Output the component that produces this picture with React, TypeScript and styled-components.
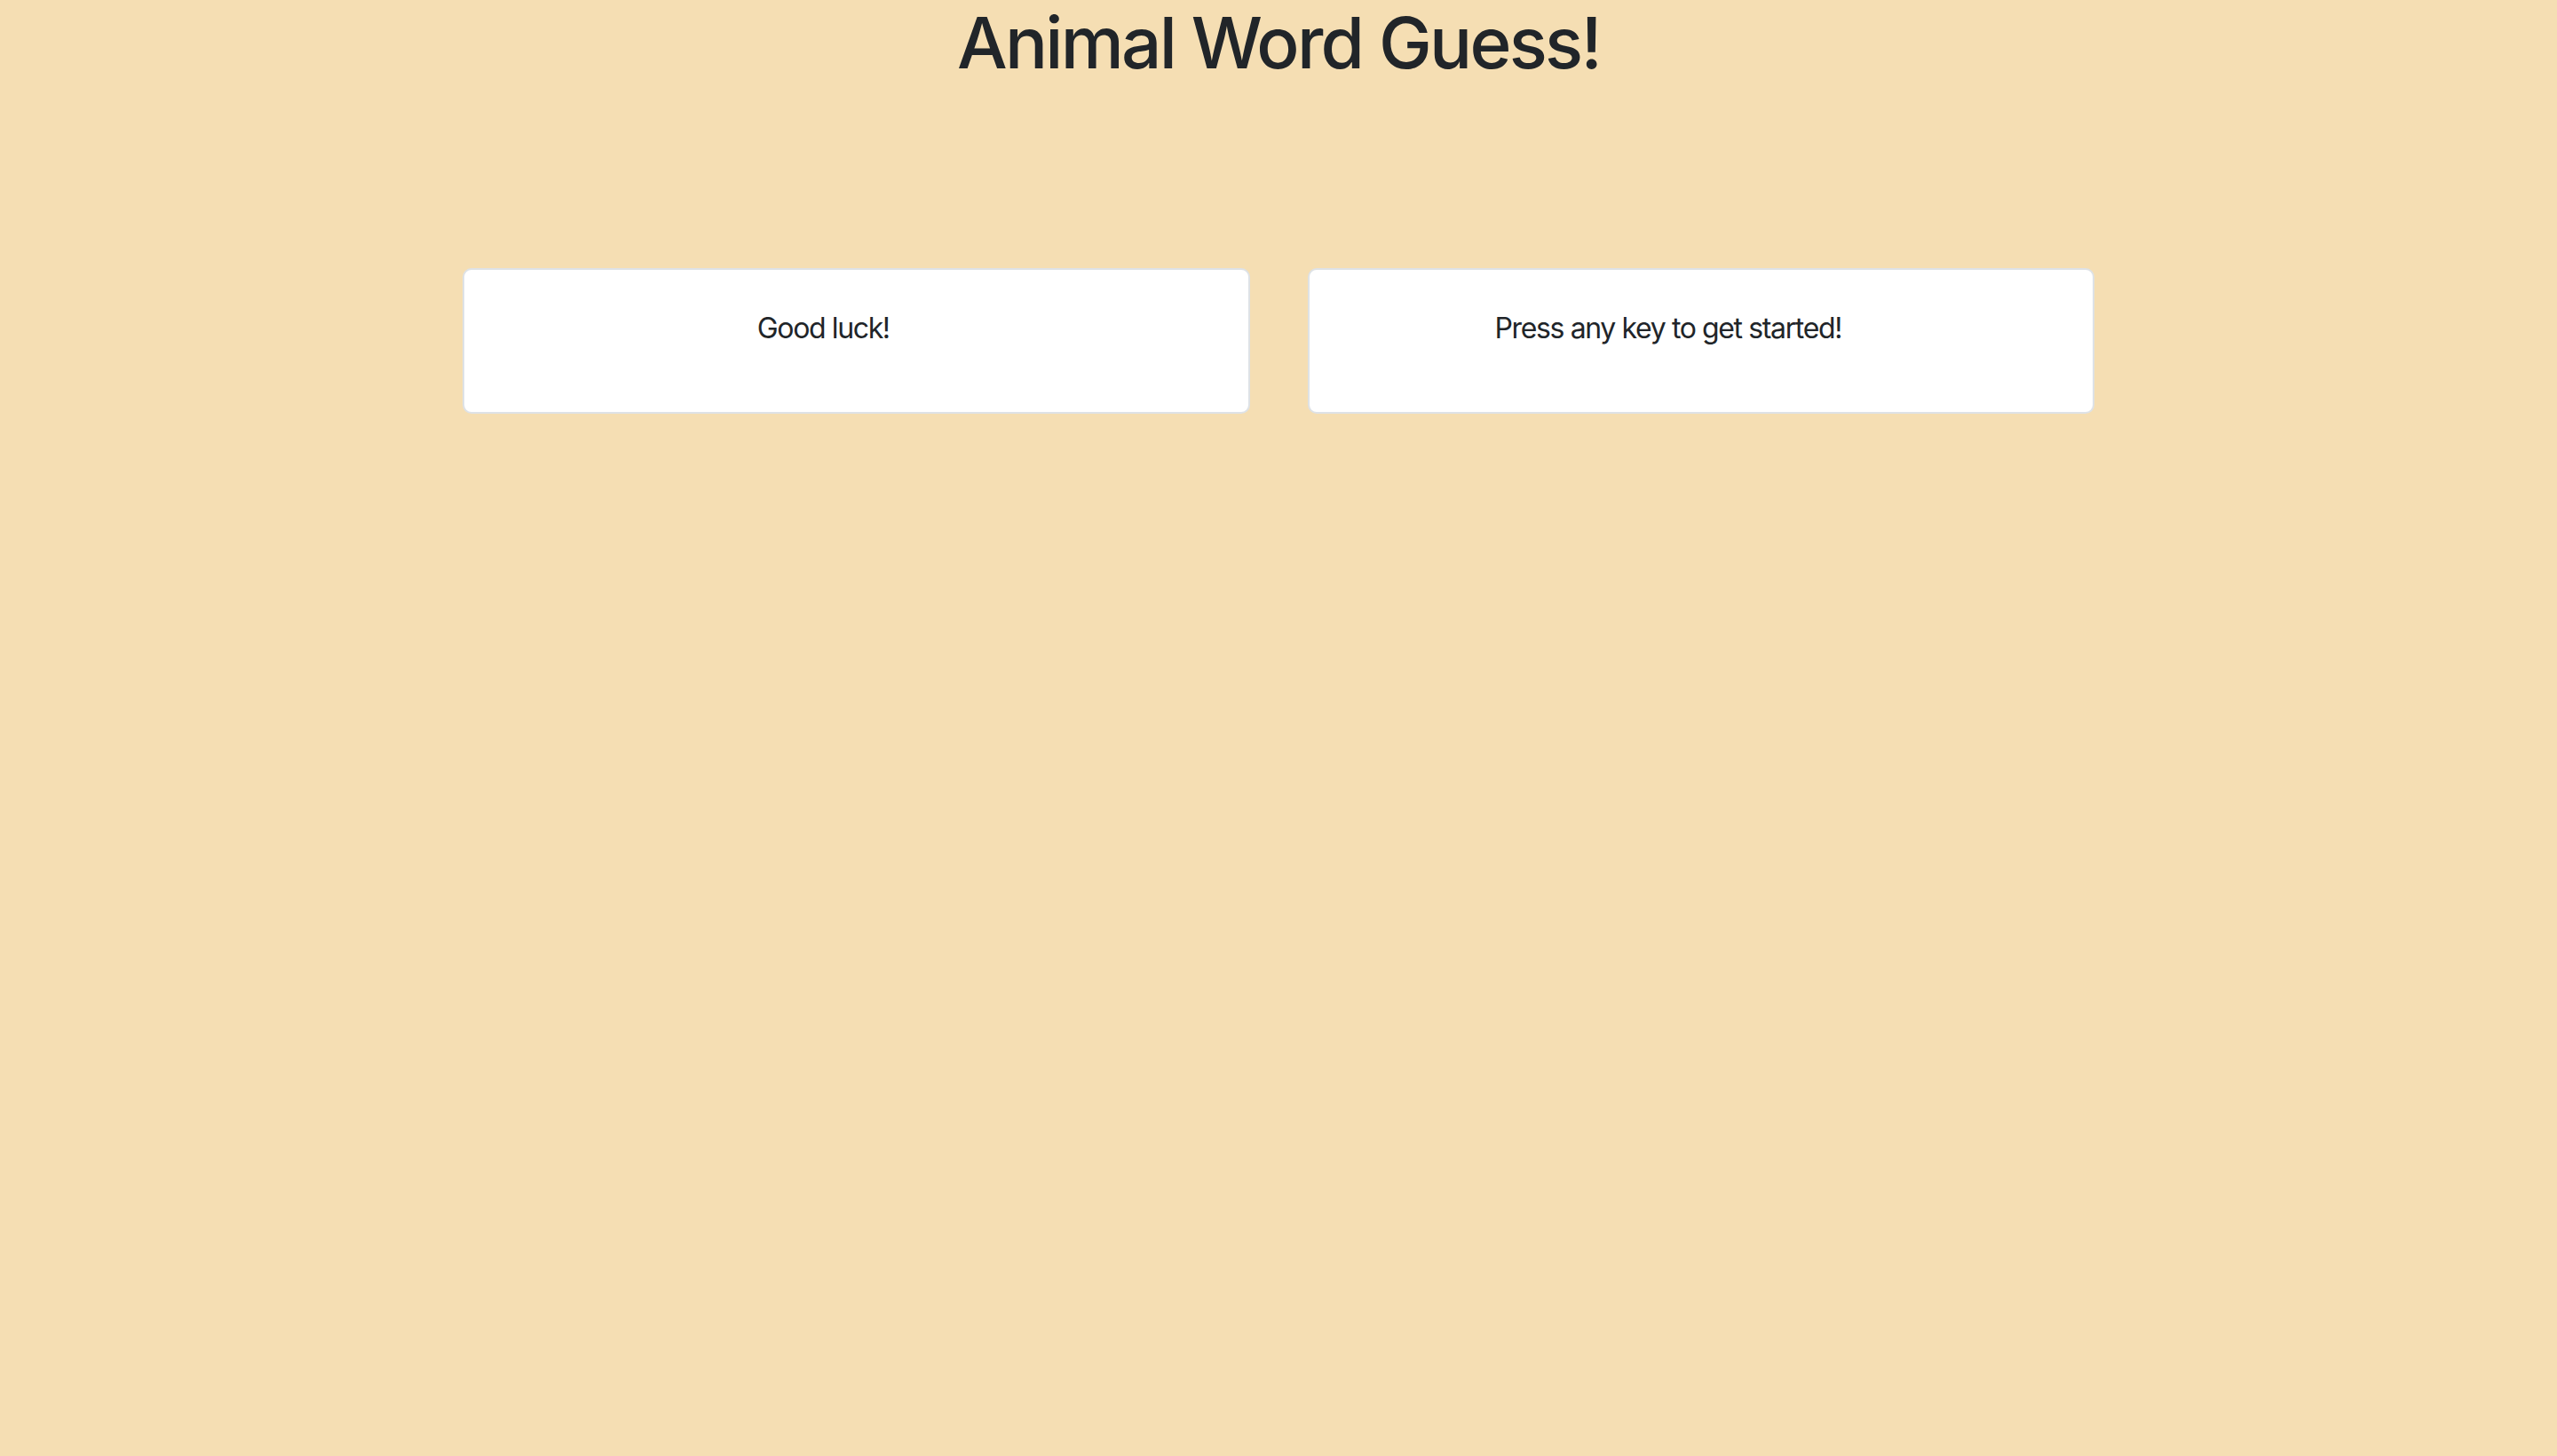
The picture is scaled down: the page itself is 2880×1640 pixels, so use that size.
import { createGlobalStyle, styled } from 'styled-components';

const GlobalStyle = createGlobalStyle`
  html, body {
    margin: 0;
    padding: 0;
    background: #f5deb3;
  }
  body {
    min-height: 1640px;
    font-family: Inter, 'Noto Sans', 'Liberation Sans', sans-serif;
    color: #212529;
  }
`;

const App = () => {
  return (
    <>
      <GlobalStyle />
      <Layout>
        <Title>Animal Word Guess!</Title>
        <CardRow>
          <Card>
            <Message>Good luck!</Message>
          </Card>
          <Card>
            <Message>Press any key to get started!</Message>
          </Card>
        </CardRow>
      </Layout>
    </>
  );
};

export default App;

const Layout = styled.div`
  display: flex;
  flex-direction: column;
  align-items: center;
`;

const Title = styled.h1`
  margin: 0 0 16px;
  font-size: 80px;
  font-weight: 500;
  line-height: 1.2;
  letter-spacing: -0.034em;
  text-align: center;
`;

const CardRow = styled.div`
  width: 1838px;
  margin-top: 190px;
  display: flex;
  gap: 65px;
`;

const Card = styled.div`
  flex: 1;
  background: #ffffff;
  border: 2px solid #dee2e6;
  border-radius: 10px;
  padding: 42px 114px 38px 40px;
`;

const Message = styled.p`
  margin: 0 0 32px;
  font-size: 32px;
  line-height: 1.5;
  letter-spacing: -0.043em;
  text-align: center;
`;
